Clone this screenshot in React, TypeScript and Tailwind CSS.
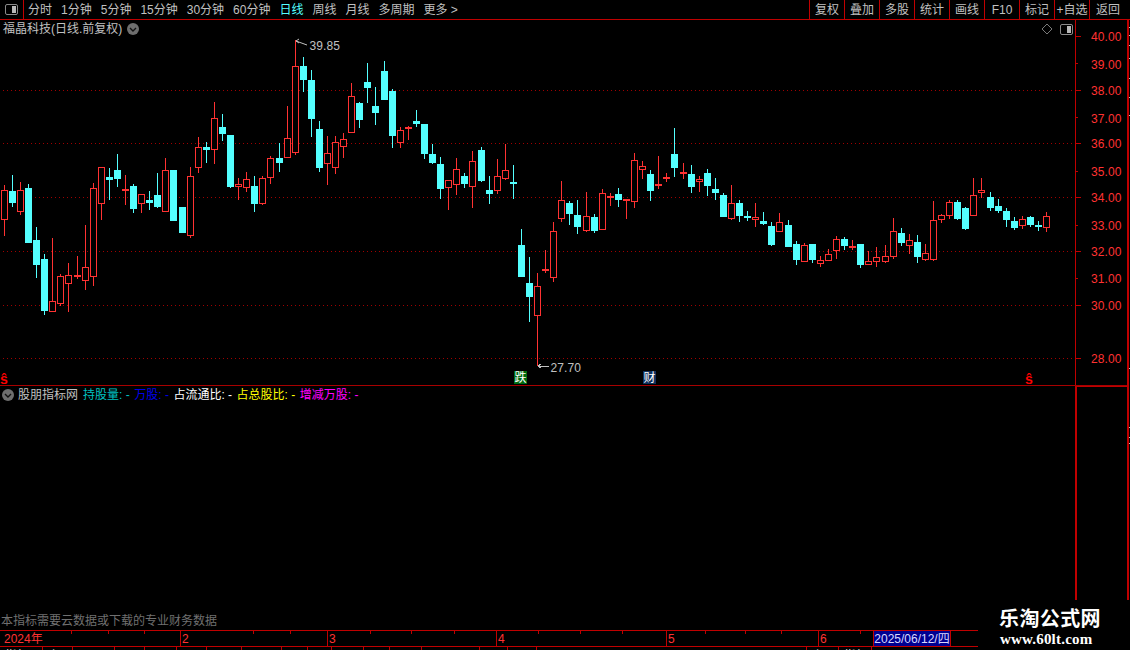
const A = [
  [0, 465, 481, 571, 617], [1, 435, 483, 518, 530], [0, 457, 481, 545, 555], [1, 463, 474, 638, 638], [1, 592, 630, 704, 743],
  [1, 672, 687, 843, 855], [0, 625, 814, 845, 845], [0, 733, 739, 821, 827], [0, 700, 736, 761, 845], [0, 679, 736, 740, 746],
  [0, 586, 712, 752, 779], [0, 460, 475, 740, 767], [0, 412, 412, 523, 569], [1, 415, 441, 450, 510], [1, 373, 420, 447, 470],
  [0, 435, 477, 480, 525], [1, 463, 468, 537, 549], [0, 493, 493, 521, 549], [1, 484, 510, 519, 540], [1, 430, 495, 531, 534],
  [0, 385, 421, 545, 545], [1, 420, 420, 573, 573], [1, 531, 531, 609, 609], [0, 412, 439, 617, 623], [0, 322, 352, 415, 429],
  [1, 337, 351, 360, 399], [0, 217, 265, 361, 402], [1, 252, 291, 312, 333], [1, 315, 315, 471, 473], [0, 445, 463, 472, 510],
  [0, 427, 448, 475, 485], [1, 438, 468, 522, 546], [0, 439, 445, 521, 525], [0, 379, 385, 445, 462], [1, 340, 384, 399, 426],
  [0, 229, 325, 383, 383], [0, 30, 109, 368, 374], [1, 82, 109, 150, 186], [1, 121, 151, 267, 321], [1, 274, 298, 414, 426],
  [0, 319, 370, 401, 465], [0, 319, 337, 413, 432], [0, 310, 328, 350, 384], [0, 160, 199, 308, 308], [1, 216, 220, 270, 294],
  [1, 99, 156, 174, 219], [1, 172, 229, 249, 285], [1, 94, 124, 210, 210], [1, 178, 183, 318, 354], [0, 292, 301, 339, 354],
  [0, 289, 292, 296, 330], [1, 241, 273, 282, 291], [1, 282, 282, 372, 387], [1, 343, 372, 399, 402], [1, 381, 402, 477, 507],
  [0, 451, 451, 473, 540], [0, 385, 418, 464, 495], [1, 430, 438, 462, 474], [0, 364, 394, 470, 534], [1, 352, 360, 453, 456],
  [1, 439, 480, 492, 522], [0, 388, 439, 483, 492], [0, 342, 421, 446, 450], [1, 405, 456, 462, 507], [1, 597, 645, 741, 741],
  [1, 682, 759, 801, 876], [0, 730, 769, 857, 1008],
];
const B = [
  [0, 390, 447, 454, 458], [0, 306, 334, 473, 486], [0, 183, 241, 296, 306], [1, 244, 249, 282, 315], [1, 240, 285, 321, 342],
  [0, 217, 289, 332, 336], [1, 282, 291, 333, 339], [0, 208, 220, 329, 329], [0, 219, 228, 233, 258], [1, 204, 222, 240, 261],
  [0, 238, 237, 243, 297], [0, 99, 121, 245, 264], [0, 123, 139, 149, 177], [1, 151, 162, 213, 243], [0, 108, 192, 197, 207],
  [0, 160, 171, 176, 186], [1, 24, 102, 144, 171], [0, 129, 156, 161, 177], [1, 135, 162, 201, 219], [0, 168, 178, 185, 216],
  [1, 148, 159, 198, 228], [1, 174, 207, 219, 240], [1, 219, 225, 291, 291], [0, 195, 250, 296, 300], [1, 240, 249, 288, 306],
  [1, 273, 288, 291, 303], [0, 249, 292, 299, 321], [1, 277, 303, 312, 315],
];
const C = [
  [1, 186, 198, 255, 258], [0, 159, 187, 215, 215], [1, 180, 195, 261, 262], [1, 243, 252, 300, 315], [0, 249, 256, 305, 305],
  [1, 252, 252, 300, 309], [0, 289, 301, 311, 321], [0, 267, 283, 302, 302], [0, 228, 238, 272, 297], [1, 231, 237, 258, 270],
  [0, 240, 258, 263, 270], [1, 252, 252, 315, 324], [0, 273, 304, 314, 314], [0, 262, 292, 305, 321], [0, 255, 289, 305, 309],
  [0, 174, 214, 290, 297], [1, 204, 219, 249, 258], [0, 222, 241, 257, 282], [1, 225, 246, 291, 309], [0, 252, 280, 299, 303],
  [0, 123, 181, 299, 303], [0, 162, 166, 179, 189], [0, 120, 127, 167, 177], [1, 120, 126, 177, 180], [1, 141, 144, 207, 210],
  [0, 54, 106, 167, 167], [0, 54, 91, 98, 114], [1, 96, 111, 144, 153], [1, 117, 138, 153, 159], [1, 144, 153, 180, 201],
  [1, 171, 183, 204, 210], [0, 168, 178, 197, 207], [1, 168, 171, 195, 201], [1, 183, 195, 201, 213], [0, 156, 169, 203, 216],
];
const RED = "#ff3232";
const CYAN = "#54ffff";
const candles = [
  ...A.map((r) => ({ r, o: 30 })),
  ...B.map((r) => ({ r, o: 120 })),
  ...C.map((r) => ({ r, o: 160 })),
].map(({ r, o }, i) => {
  const py = (v: number) => Math.round(o + v / 3);
  return { up: r[0] === 1, hi: py(r[1]), top: py(r[2]), bot: py(r[3]), lo: py(r[4]), c: Math.floor(4.3 + 8.08 * i) + 0.5 };
});

function Candle({ d }: { d: (typeof candles)[number] }) {
  const col = d.up ? CYAN : RED;
  const thin = d.bot - d.top <= 2;
  return (
    <g>
      <line x1={d.c} x2={d.c} y1={d.hi} y2={d.up || thin ? d.lo : d.top} stroke={col} />
      {!d.up && !thin && <line x1={d.c} x2={d.c} y1={d.bot} y2={d.lo} stroke={col} />}
      {d.up || thin ? (
        <rect x={d.c - 3.5} y={d.top} width={7} height={Math.max(d.bot - d.top, 2)} fill={col} />
      ) : (
        <rect x={d.c - 3} y={d.top + 0.5} width={6} height={d.bot - d.top - 1} fill="#000" stroke={col} />
      )}
    </g>
  );
}

const prices: [string, number, boolean, number][] = [
  ["40.00", 36.5, false, 41], ["39.00", 63.5, false, 69], ["38.00", 90.5, true, 95], ["37.00", 117.5, false, 123], ["36.00", 143.5, true, 148],
  ["35.00", 171.5, false, 176], ["34.00", 197.5, true, 202], ["33.00", 225.5, false, 230], ["32.00", 251.5, true, 256], ["31.00", 278.5, false, 283],
  ["30.00", 305.5, true, 310], ["28.00", 358.5, true, 363],
];

function Chart() {
  return (
    <svg width={1127} height={365} viewBox="0 20 1127 365" shapeRendering="crispEdges" className="block">
      {prices.filter((p) => p[2]).map((p) => (
        <line key={p[0]} x1={3} x2={1075} y1={p[1]} y2={p[1]} stroke="#a00000" strokeDasharray="1 3" />
      ))}
      <line x1={1075.5} x2={1075.5} y1={20} y2={385} stroke="#c00000" />
      {prices.map((p) => (
        <g key={p[0]}>
          <line x1={1076} x2={p[2] || p[0] === "40.00" ? 1081 : 1078} y1={p[1]} y2={p[1]} stroke="#c00000" />
          <text x={1091} y={p[3]} fill={RED} fontSize={12} letterSpacing={0.1} shapeRendering="auto">{p[0]}</text>
        </g>
      ))}
      {candles.map((d, i) => <Candle key={i} d={d} />)}
      <path d="M296 41L307 45M296 41L299 39M296 41L299 43" stroke="#c0c0c0" fill="none" shapeRendering="auto" />
      <text x={309.5} y={50} fill="#c0c0c0" fontSize={12} letterSpacing={0.1} shapeRendering="auto">39.85</text>
      <path d="M538 366H549M538 366L541 364M538 366L541 368" stroke="#c0c0c0" fill="none" />
      <text x={550.5} y={372} fill="#c0c0c0" fontSize={12} letterSpacing={0.1} shapeRendering="auto">27.70</text>
    </svg>
  );
}

function DownDot() {
  return (
    <svg width={12} height={12} viewBox="0 0 12 12" className="shrink-0">
      <circle cx={6} cy={6} r={6} fill="#6e6e6e" />
      <path d="M3 5l3 3 3-3" stroke="#111" strokeWidth={1.4} fill="none" />
    </svg>
  );
}

function PanelIcon({ w = 13 }: { w?: number }) {
  return (
    <svg width={w} height={11} viewBox="0 0 13 11" className="shrink-0">
      <rect x={0.5} y={0.5} width={12} height={10} rx={1.5} fill="#000" stroke="#8a8a8a" />
      <rect x={7} y={2} width={4} height={7} fill="#b8b8b8" />
    </svg>
  );
}

const periods = ["分时", "1分钟", "5分钟", "15分钟", "30分钟", "60分钟", "日线", "周线", "月线", "多周期", "更多 >"];
const actions = ["复权", "叠加", "多股", "统计", "画线", "F10", "标记", "+自选"];
const legend: [string, string][] = [
  ["持股量", "text-[#00c0c0]"], ["万股", "text-[#0000e8]"], ["占流通比", "text-white"], ["占总股比", "text-[#ffff00]"], ["增减万股", "text-[#ff00ff]"],
];
const months: [string, string][] = [["2024年", "w-[180px] pl-1"], ["2", "w-[147px] pl-px border-l"], ["3", "w-[169px] pl-px border-l"], ["4", "w-[170px] pl-px border-l"], ["5", "w-[152px] pl-px border-l"], ["6", "w-[55px] pl-px border-l"]];
const ticks = [71, 108, 144, 253, 290, 370, 411, 454, 538, 580, 622, 705, 745, 781, 860];
const tabs: [string, number][] = [
  ["指标", 43], ["上", 30], ["", 42], ["", 30], ["", 32], ["", 30], ["", 35], ["", 40], ["", 26], ["", 24], ["", 32], ["", 26], ["", 32], ["", 58], ["", 28], ["", 29], ["", 270], ["上", 32], ["指标", 33],
];

export default function App() {
  return (
    <div className="relative w-[1130px] h-[650px] overflow-hidden bg-black text-[12px] leading-[16px] text-[#c0c0c0] [font-family:'Liberation_Sans','Noto_Sans_CJK_SC',sans-serif]">
      <header className="flex h-[20px] border-b border-[#c00000]">
        <div className="flex w-[24px] items-center justify-center border-r border-[#c00000]"><PanelIcon /></div>
        <nav className="flex items-center gap-[9px] pl-[4px]">
          {periods.map((p) => (
            <span key={p} className={p === "日线" ? "text-[#54ffff]" : ""}>{p}</span>
          ))}
        </nav>
        <div className="ml-auto flex">
          {actions.map((a) => (
            <span key={a} className="flex w-[35px] items-center justify-center whitespace-nowrap border-l border-[#c00000]">{a}</span>
          ))}
          <span className="flex w-[41px] items-center border-l border-[#c00000] pl-[6px]">返回</span>
        </div>
      </header>

      <div className="flex h-[580px]">
        <div className="flex w-[1127px] flex-col">
          <section className="relative h-[366px] border-b border-[#a80000]">
            <Chart />
            <div className="absolute left-[3px] top-[1px] flex items-center gap-[5px]">
              <span>福晶科技(日线.前复权)</span>
              <DownDot />
            </div>
            <svg width={12} height={12} viewBox="0 0 12 12" className="absolute left-[1041px] top-[3px]">
              <path d="M6 1l5 5-5 5-5-5z" fill="none" stroke="#7a7a7a" />
            </svg>
            <div className="absolute left-[1060px] top-[4px]"><PanelIcon /></div>
            <span className="absolute left-0 top-[351px] text-[14px] font-bold text-[#ff0000]">ŝ</span>
            <span className="absolute left-[1025px] top-[351px] text-[14px] font-bold text-[#ff0000]">ŝ</span>
            <span className="absolute left-[514px] top-[351px] flex h-[13px] w-[13px] items-center justify-center bg-[#006a10] text-white">跌</span>
            <span className="absolute left-[643px] top-[351px] flex h-[13px] w-[13px] items-center justify-center bg-[#10305c] text-white">财</span>
          </section>
          <section className="flex flex-1">
            <div className="flex h-[17px] flex-1 items-center pl-[2px] pt-[1px]">
              <DownDot />
              <span className="ml-[4px] mr-[5px]">股朋指标网</span>
              <div className="flex gap-[4.5px]">
                {legend.map(([t, c]) => (
                  <span key={t} className={c}>{t}: -</span>
                ))}
              </div>
            </div>
            <div className="w-[52px] border-l-2 border-t border-[#c00000]" />
          </section>
        </div>
        <div className="relative w-[3px] border-l-2 border-[#c00000]">
          {[7, 15, 25, 38, 58, 77, 95, 348, 407, 417, 423].map((y) => (
            <span key={y} className="absolute left-0 h-px w-px bg-[#c0c0c0]" style={{ top: y }} />
          ))}
        </div>
      </div>

      <div className="flex h-[30px] items-end pb-[1px] pl-[1px] text-[#707070]">本指标需要云数据或下载的专业财务数据</div>

      <div className="relative flex h-[17px] w-[978px] border-y border-[#c00000] text-[#ff3232]">
        {months.map(([m, c]) => (
          <span key={m} className={`${c} h-[15px] border-[#c00000]`}>{m}</span>
        ))}
        <span className="h-[15px] w-[78px] border-x border-[#c00000] bg-[#000090] text-center text-[#d8d8ff]">2025/06/12/四</span>
        {ticks.map((t) => (
          <span key={t} className="absolute top-0 h-[3px] w-px bg-[#c00000]" style={{ left: t }} />
        ))}
      </div>

      <div className="flex h-[3px] overflow-hidden">
        {tabs.map(([t, w], i) => (
          <span key={i} className="border-r border-[#c00000] pl-[5px] pt-px text-[#e0e0e0]" style={{ width: w }}>{t}</span>
        ))}
      </div>

      <aside className="absolute left-[978px] top-[600px] flex h-[50px] w-[152px] flex-col bg-black pl-[21px] pt-[7px] font-bold text-white">
        <span className="text-[20px] leading-[24px] tracking-[0.4px]">乐淘公式网</span>
        <span className="ml-px text-[15px] leading-[16px] tracking-[0.2px] [font-family:'Liberation_Serif',serif]">www.60lt.com</span>
      </aside>
    </div>
  );
}
